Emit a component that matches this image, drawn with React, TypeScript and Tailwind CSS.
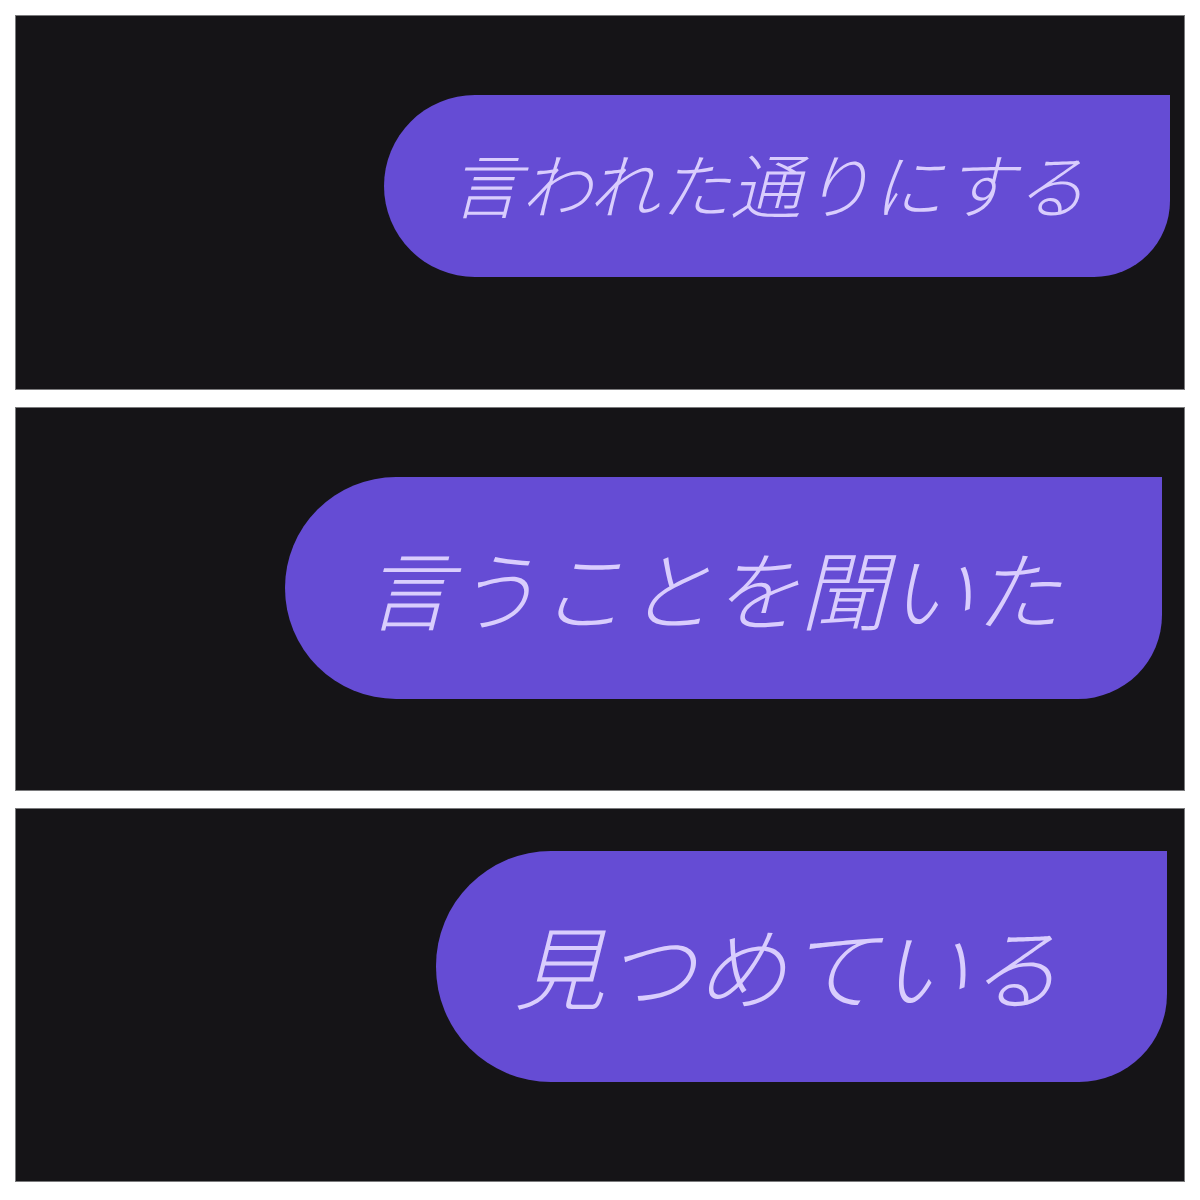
const jp = "font-['Noto_Sans_CJK_JP','Noto_Sans',sans-serif]";

type Bubble = {
  text: string;
  size: string;
  box: string;
  pad: string;
  panel: string;
};

const bubbles: Bubble[] = [
  {
    text: "言われた通りにする",
    size: "text-[71px] -mt-[8px]",
    box: "w-[786px] h-[182px] rounded-l-[91px] rounded-br-[76px]",
    pad: "pl-[66px]",
    panel: "h-[375px] pt-[79px] pr-[14px]",
  },
  {
    text: "言うことを聞いた",
    size: "text-[87px] -mt-[4px]",
    box: "w-[877px] h-[222px] rounded-l-[111px] rounded-br-[84px]",
    pad: "pl-[80px]",
    panel: "h-[384px] pt-[69px] pr-[22px]",
  },
  {
    text: "見つめている",
    size: "text-[91px] -mt-[6px]",
    box: "w-[731px] h-[231px] rounded-l-[115px] rounded-br-[88px]",
    pad: "pl-[78px]",
    panel: "h-[374px] pt-[42px] pr-[17px]",
  },
];

function ChatPanel({ b }: { b: Bubble }) {
  return (
    <div className={`flex justify-end items-start bg-[#151417] border border-[#7a7a7c] ${b.panel}`}>
      <div className={`flex items-center bg-[#654cd4] ${b.box} ${b.pad}`}>
        <span className={`${jp} ${b.size} italic font-light leading-none text-[#d9cdfd] whitespace-nowrap`}>
          {b.text}
        </span>
      </div>
    </div>
  );
}

export default function App() {
  return (
    <div className="w-[1200px] h-[1200px] bg-white px-[15px] pt-[15px] flex flex-col gap-[17px]">
      {bubbles.map((b) => (
        <ChatPanel key={b.text} b={b} />
      ))}
    </div>
  );
}
